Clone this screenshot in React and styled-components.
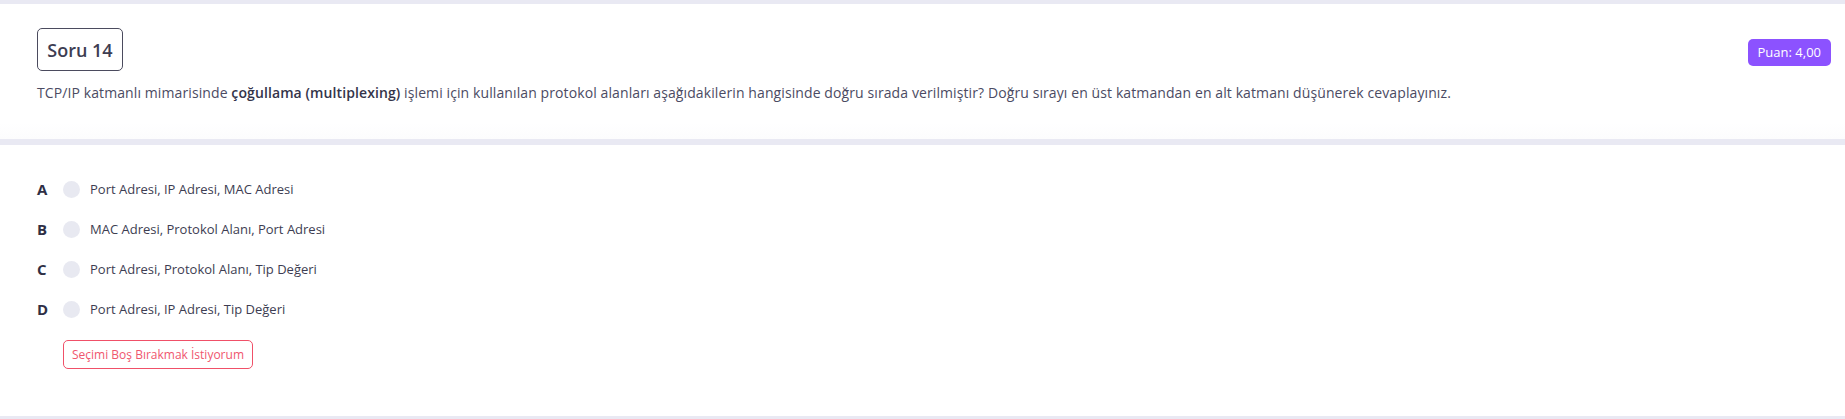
import React from 'react'
import styled, { createGlobalStyle } from 'styled-components'

const GlobalStyle = createGlobalStyle`
  body {
    margin: 0;
    background: #e9e9f3;
    font-family: "Open Sans", "Noto Sans", sans-serif;
    color: #3d3d52;
  }
`

const Page = styled.div`
  display: flex;
  flex-direction: column;
  gap: 6px;
  padding: 4px 0 3px;
`

const QuestionCard = styled.section`
  background: linear-gradient(#fff 88%, #fcfcfd);
  height: 135px;
  box-sizing: border-box;
  padding: 24px 14px 0 37px;
`

const HeaderRow = styled.div`
  display: flex;
  justify-content: space-between;
  align-items: center;
`

const TitleBox = styled.div`
  display: flex;
  align-items: center;
  justify-content: center;
  width: 86px;
  height: 43px;
  box-sizing: border-box;
  border: 1px solid #4b4b5e;
  border-radius: 5px;
  font-size: 18px;
  font-weight: 600;
  color: #3d3d52;
`

const ScoreBadge = styled.div`
  margin-top: 6px;
  background: #8c52ff;
  color: #fff;
  font-size: 13px;
  height: 27px;
  line-height: 27px;
  padding: 0 10px;
  border-radius: 5px;
`

const QuestionText = styled.p`
  margin: 12px 0 0;
  font-size: 14px;
  line-height: 20px;
  letter-spacing: 0.1px;
  color: #4b4b63;

  b {
    font-weight: 600;
    color: #34344a;
  }
`

const AnswerCard = styled.section`
  background: #fff;
  height: 271px;
  box-sizing: border-box;
  padding: 24px 37px 0;
`

const OptionRow = styled.label`
  display: flex;
  align-items: center;
  height: 40px;
  cursor: pointer;
`

const Letter = styled.span`
  width: 26px;
  font-size: 15px;
  font-weight: 700;
  color: #2f2f45;
`

const Radio = styled.span`
  width: 17px;
  height: 17px;
  border-radius: 50%;
  background: #e8e9f1;
  margin-right: 10px;
`

const OptionText = styled.span`
  font-size: 13px;
  color: #3d3d52;
`

const ClearButton = styled.button`
  margin: 11px 0 0 26px;
  height: 29px;
  padding: 0 8px;
  background: #fff;
  border: 1px solid #f05068;
  border-radius: 5px;
  color: #f0566e;
  font-family: inherit;
  font-size: 12px;
`

const options = [
  ['A', 'Port Adresi, IP Adresi, MAC Adresi'],
  ['B', 'MAC Adresi, Protokol Alanı, Port Adresi'],
  ['C', 'Port Adresi, Protokol Alanı, Tip Değeri'],
  ['D', 'Port Adresi, IP Adresi, Tip Değeri'],
]

const App = () => {
  return <Page>
    <GlobalStyle />
    <QuestionCard>
      <HeaderRow>
        <TitleBox>Soru 14</TitleBox>
        <ScoreBadge>Puan: 4,00</ScoreBadge>
      </HeaderRow>
      <QuestionText>
        TCP/IP katmanlı mimarisinde <b>çoğullama (multiplexing)</b> işlemi için kullanılan protokol alanları aşağıdakilerin hangisinde doğru sırada verilmiştir? Doğru sırayı en üst katmandan en alt katmanı düşünerek cevaplayınız.
      </QuestionText>
    </QuestionCard>
    <AnswerCard>
      {options.map(([letter, text]) => (
        <OptionRow key={letter}>
          <Letter>{letter}</Letter>
          <Radio />
          <OptionText>{text}</OptionText>
        </OptionRow>
      ))}
      <ClearButton>Seçimi Boş Bırakmak İstiyorum</ClearButton>
    </AnswerCard>
  </Page>
}

export default App
